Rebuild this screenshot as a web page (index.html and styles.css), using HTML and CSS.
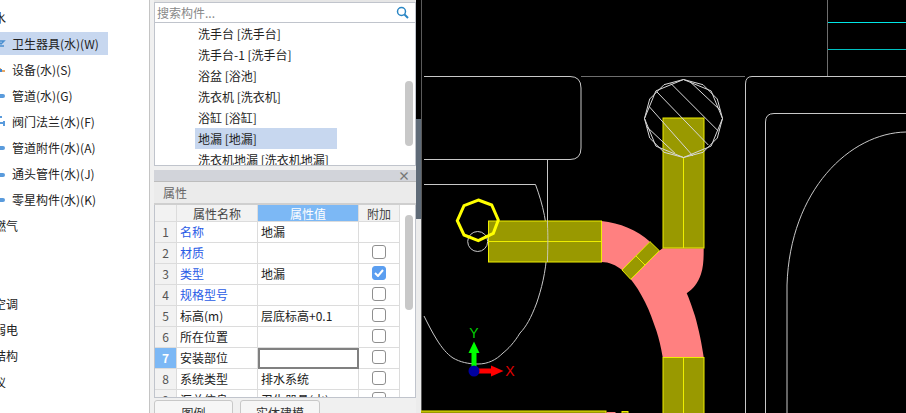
FILE: index.html
```html
<!DOCTYPE html>
<html lang="zh-CN">
<head>
<meta charset="utf-8">
<title>属性</title>
<link rel="stylesheet" href="styles.css">
</head>
<body>
<div class="app">
  <nav class="tree">
    <div class="tree-row"><span class="clipped">水</span></div>
    <div class="tree-row sel"><svg class="ti" viewBox="0 0 12 12"><path d="M-2 3h6l-3 3zM-2 8h6" fill="none" stroke="#4a8fd0" stroke-width="1.5"/></svg>卫生器具(水)(W)</div>
    <div class="tree-row"><svg class="ti" viewBox="0 0 12 12"><path d="M0 4v3h-3M0 7h5" fill="none" stroke="#e08a30" stroke-width="1.5"/><rect x="-2" y="5" width="4" height="3" fill="#3f86cf"/></svg>设备(水)(S)</div>
    <div class="tree-row"><svg class="ti" viewBox="0 0 12 12"><rect x="-2" y="4" width="7" height="4" rx="2" fill="#5a9bdc"/></svg>管道(水)(G)</div>
    <div class="tree-row"><svg class="ti" viewBox="0 0 12 12"><path d="M-1 1h3M-1 7h6" fill="none" stroke="#5a9bdc" stroke-width="2"/><rect x="3" y="5" width="2" height="5" fill="#5a9bdc"/></svg>阀门法兰(水)(F)</div>
    <div class="tree-row"><svg class="ti" viewBox="0 0 12 12"><rect x="-2" y="4" width="7" height="4" rx="2" fill="#5a9bdc"/></svg>管道附件(水)(A)</div>
    <div class="tree-row"><svg class="ti" viewBox="0 0 12 12"><rect x="-2" y="5" width="7" height="4" rx="2" fill="#5a9bdc"/></svg>通头管件(水)(J)</div>
    <div class="tree-row"><svg class="ti" viewBox="0 0 12 12"><rect x="-2" y="4" width="7" height="4" rx="2" fill="#5a9bdc"/></svg>零星构件(水)(K)</div>
    <div class="tree-row"><span class="clipped">燃气</span></div>
    <div class="tree-row"></div>
    <div class="tree-row"></div>
    <div class="tree-row"><span class="clipped">空调</span></div>
    <div class="tree-row"><span class="clipped">弱电</span></div>
    <div class="tree-row"><span class="clipped">结构</span></div>
    <div class="tree-row"><span class="clipped">仪</span></div>
  </nav>

  <section class="mid">
    <div class="top-strip"></div>
    <div class="search">
      <span class="search-text">搜索构件...</span>
      <svg class="search-icon" width="13" height="13" viewBox="0 0 13 13"><circle cx="5.5" cy="5.5" r="4" fill="none" stroke="#2a86c4" stroke-width="1.5"/><path d="M8.5 8.5l3.5 3.5" stroke="#2a86c4" stroke-width="2"/></svg>
    </div>
    <div class="list">
      <div class="item">洗手台 [洗手台]</div>
      <div class="item">洗手台-1 [洗手台]</div>
      <div class="item">浴盆 [浴池]</div>
      <div class="item">洗衣机 [洗衣机]</div>
      <div class="item">浴缸 [浴缸]</div>
      <div class="item current">地漏 [地漏]</div>
      <div class="item">洗衣机地漏 [洗衣机地漏]</div>
      <div class="thumb list-thumb"></div>
    </div>
    <div class="props">
      <div class="props-bar"><span class="close">×</span></div>
      <div class="props-head">属性</div>
      <div class="props-body">
        <table class="grid">
          <colgroup><col class="c-idx"><col class="c-name"><col class="c-val"><col class="c-add"></colgroup>
          <tr class="hdr"><th></th><th>属性名称</th><th class="active">属性值</th><th>附加</th></tr>
          <tr><td class="idx">1</td><td class="link">名称</td><td>地漏</td><td></td></tr>
          <tr><td class="idx">2</td><td class="link">材质</td><td></td><td><span class="cb"></span></td></tr>
          <tr><td class="idx">3</td><td class="link">类型</td><td>地漏</td><td><span class="cb on"><svg width="10" height="8" viewBox="0 0 10 8"><path d="M1 4l3 3 5-6" fill="none" stroke="#fff" stroke-width="2"/></svg></span></td></tr>
          <tr><td class="idx">4</td><td class="link">规格型号</td><td></td><td><span class="cb"></span></td></tr>
          <tr><td class="idx">5</td><td>标高(m)</td><td>层底标高+0.1</td><td><span class="cb"></span></td></tr>
          <tr><td class="idx">6</td><td>所在位置</td><td></td><td><span class="cb"></span></td></tr>
          <tr><td class="idx cur">7</td><td>安装部位</td><td class="editing"></td><td><span class="cb"></span></td></tr>
          <tr><td class="idx">8</td><td>系统类型</td><td>排水系统</td><td><span class="cb"></span></td></tr>
          <tr><td class="idx">9</td><td>汇总信息</td><td>卫生器具(水)</td><td><span class="cb"></span></td></tr>
        </table>
        <div class="thumb grid-thumb"></div>
      </div>
      <div class="actions">
        <button class="btn b1">图例</button>
        <button class="btn b2">实体建模</button>
      </div>
    </div>
  </section>

  <div class="splitter">
    <div class="sp-top"></div>
    <div class="sp-mid"></div>
    <div class="sp-bot"></div>
  </div>

  <svg class="canvas" width="485" height="413" viewBox="421 0 485 413">
    <path class="edge" d="M421.5 0V413"/>
    <g class="ln">
      <path d="M424 76.5H570Q581 76.5 581 88V148Q581 159.5 570 159.5H424"/>
      <path d="M547.5 159.5V225"/>
      <path d="M424 184.5H535.5C543 205 548 225 547 250C546 273 541 290 536.7 303C531 318 526 327 520 333C514 343 508 349 503 353C496 360 488 364 478 364C468 364 460 362 453 358C447 354 442 348 437 340C432 332 428 324 424 316"/>
      <path class="dim" d="M581 76.5H745"/>
      <path d="M906 76.5H752Q745.5 76.5 745.5 84V413"/>
      <path d="M906 113.5H774Q765.5 113.5 765.5 122V413"/>
      <path d="M906 132C850 133 790 190 787 285V413"/>
      <path class="dim" d="M827.5 0V76"/>
      <circle cx="477.7" cy="241.5" r="10"/>
    </g>
    <path class="cy1" d="M828 22.5H906"/>
    <path class="cy2" d="M828 49.5H906"/>

    <path class="pink" d="M601.5 221C620 223 637 230 650 241.7L622 270C616 265 609 262 601.5 262Z"/>
    <path class="pink" d="M659.3 250.7L662.7 248.3H703.7C703.7 258 703.5 267 701 274C698 283 693 289 686.7 293.3C689 298 692 307 695 316C699 330 702 345 703.7 357.3H662.7C661 347 659 339 656.5 331C653 321 650 312 645 302C640 292 636 286 630.7 279.3Z"/>

    <g class="olive">
      <rect x="488.5" y="221" width="113" height="41"/>
      <path d="M488.5 241.5H601.5"/>
      <rect x="663" y="118" width="41" height="130"/>
      <path d="M683.5 157V248"/>
      <rect x="663" y="357.5" width="41" height="60"/>
      <path d="M683.5 357V413"/>
      <path d="M650 241.7L659.3 250.7L630.7 279.3L622 270Z"/>
      <path d="M636 256L645 265"/>
      <rect x="410" y="411" width="196" height="8"/>
      <rect x="622" y="411.5" width="6" height="6"/>
    </g>
    <rect class="pink" x="606.5" y="412" width="9" height="2"/>

    <path class="ln-over" d="M547.5 221V225C548 235 548 242 547.4 262"/>

    <g class="hatch">
      <path d="M683.5 79.5L703 84.7L717.3 99L722.5 118.5L717.3 138L703 152.3L683.5 157.5L664 152.3L649.7 138L644.5 118.5L649.7 99L664 84.7Z"/>
      <path d="M683.5 79.5L711.1 90.9L722.5 118.5L711.1 146.1L683.5 157.5L655.9 146.1L644.5 118.5L655.9 90.9Z"/>
      <path d="M670.7 83.3L718.3 131M690 81.7L720 110M656.7 91.7L708.3 145M649.3 106.7L693 156M646.7 126.7L675 153.3"/>
    </g>

    <path class="octa" d="M478.3 200L491.7 205L498.3 220L493.3 233.3L478.3 240.7L464 235L457.3 220.7L464 205.7Z"/>

    <rect class="g-ax" x="471.5" y="352" width="5" height="19"/>
    <path class="g-ax" d="M474 341.5L479.5 353H468.5Z"/>
    <rect class="r-ax" x="474" y="368.5" width="18" height="5"/>
    <path class="r-ax" d="M503.5 371L491 365.5V376.5Z"/>
    <circle class="b-ax" cx="474" cy="371" r="5.5"/>
    <text class="t-y" x="474" y="338" text-anchor="middle">Y</text>
    <text class="t-x" x="510" y="376" text-anchor="middle">X</text>
  </svg>
</div>
</body>
</html>
```

FILE: styles.css
```css
* { box-sizing: border-box; }
html, body { margin: 0; padding: 0; background: #000; }
body {
  font-family: "Noto Sans CJK SC", "Noto Sans", sans-serif;
  font-size: 12px;
  color: #222;
}
.app {
  display: flex;
  width: 906px;
  height: 413px;
  overflow: hidden;
}

/* left tree */
.tree {
  flex: 0 0 150px;
  height: 413px;
  padding-top: 6px;
  background: #fff;
  border-right: 1px solid #c4c4c4;
  overflow: hidden;
}
.tree-row {
  display: flex;
  align-items: center;
  height: 23px;
  margin-bottom: 3px;
  line-height: 23px;
  white-space: nowrap;
}
.tree-row.sel { width: 108px; background: #c7d7ef; }
.ti { flex: 0 0 12px; width: 12px; height: 12px; }
.clipped { margin-left: -6px; }

/* middle column */
.mid {
  flex: 0 0 266px;
  display: flex;
  flex-direction: column;
  height: 413px;
  padding-left: 4px;
  background: #f0f0f0;
  overflow: hidden;
}
.top-strip { flex: 0 0 3px; background: #e6e6e6; border-bottom: 1px solid #c0c4cc; }
.search {
  display: flex;
  flex: 0 0 20px;
  align-items: center;
  justify-content: space-between;
  padding: 0 6px 0 2px;
  background: #fff;
  border: solid #c0c4cc;
  border-width: 0 1px 1px;
  color: #888;
  line-height: 19px;
}
.list {
  position: relative;
  flex: 0 0 143px;
  background: #fff;
  border: solid #c0c4cc;
  border-width: 0 1px 1px;
  overflow: hidden;
}
.item {
  width: 142px;
  height: 21px;
  margin-left: 40px;
  padding-left: 3px;
  line-height: 21px;
  white-space: nowrap;
}
.item.current { background: #c7d7ef; }
.thumb { position: absolute; width: 8px; background: #c8c8c8; border-radius: 4px; }
.list-thumb { top: 58px; right: 2px; height: 65px; }

/* properties */
.props { flex: 1 0 auto; display: flex; flex-direction: column; margin-top: 4px; }
.props-bar {
  display: flex;
  flex: 0 0 12px;
  align-items: center;
  justify-content: flex-end;
  padding-right: 6px;
  background: #d2d4da;
  border-bottom: 1px solid #bdbdbd;
}
.close { font-size: 12px; font-weight: 700; line-height: 11px; color: #777; }
.props-head {
  flex: 0 0 23px;
  padding-left: 9px;
  background: #ebebeb;
  border-bottom: 2px solid #cfcfcf;
  color: #666;
  line-height: 21px;
}
.props-body {
  position: relative;
  flex: 0 0 193px;
  background: #fff;
  border: solid #c0c4cc;
  border-width: 0 1px 1px;
  overflow: hidden;
}
.grid {
  table-layout: fixed;
  width: 245px;
  border-collapse: separate;
  border-spacing: 0;
}
.c-idx { width: 22px; }
.c-name { width: 81px; }
.c-val { width: 101px; }
.c-add { width: 41px; }
.grid th, .grid td {
  height: 21px;
  padding: 0 0 0 3px;
  border-right: 1px solid #dcdcdc;
  border-bottom: 1px solid #dcdcdc;
  font-weight: 400;
  line-height: 20px;
  white-space: nowrap;
  overflow: hidden;
}
.grid .hdr th {
  height: 17px;
  padding: 0;
  background: #f2f2f2;
  color: #444;
  line-height: 15px;
  text-align: center;
}
.grid .hdr th.active { background: #7cb8f5; color: #fff; }
.grid td.idx { padding: 0; background: #f2f2f2; color: #555; text-align: center; }
.grid td.idx.cur { background: #7cb8f5; color: #fff; font-weight: 700; }
.grid td.link { color: #2a5ce6; }
.grid td.editing { border: 2px solid #808080; }
.grid td:last-child { padding: 0; text-align: center; }
.cb {
  display: flex;
  align-items: center;
  justify-content: center;
  width: 14px;
  height: 14px;
  margin: 0 auto 2px;
  background: #fff;
  border: 1px solid #8f8f8f;
  border-radius: 3px;
}
.cb.on { background: #5b9ef0; border-color: #5b9ef0; }
.grid-thumb { top: 10px; right: 2px; height: 95px; }
.actions { display: flex; gap: 7px; flex: 0 0 auto; padding-top: 2px; }
.btn {
  height: 24px;
  padding: 0;
  background: #f6f6f6;
  border: 1px solid #c8c8c8;
  border-radius: 3px;
  color: #333;
  font: inherit;
}
.b1 { width: 79px; }
.b2 { width: 80px; }

/* splitter */
.splitter { flex: 0 0 5px; display: flex; flex-direction: column; height: 413px; }
.sp-top { height: 119px; background: #000; }
.sp-mid { height: 100px; background: #5f6b78; }
.sp-bot { flex: 1; background: #ececec; }

/* drawing */
.canvas { flex: 0 0 485px; display: block; background: #000; }
.edge { stroke: #5a5a5a; }
.ln path, .ln circle { fill: none; stroke: #c8c8c8; stroke-width: 1; }
.ln .dim { stroke: #6e6e6e; }
.ln-over { fill: none; stroke: #c8c8b0; stroke-width: 1; }
.cy1 { stroke: #00e6e6; }
.cy2 { stroke: #00c0c0; }
.pink { fill: #ff8080; }
.olive rect, .olive path { fill: #999900; stroke: #eeee00; stroke-width: 1; }
.hatch path { fill: none; stroke: #d8d8d8; stroke-width: 1; }
.octa { fill: none; stroke: #ffff00; stroke-width: 3; }
.g-ax { fill: #00ff00; }
.r-ax { fill: #ff0000; }
.b-ax { fill: #0000a0; }
.t-y, .t-x { font-family: "Liberation Sans", sans-serif; font-size: 14px; }
.t-y { fill: #00d000; }
.t-x { fill: #e00000; }
```
